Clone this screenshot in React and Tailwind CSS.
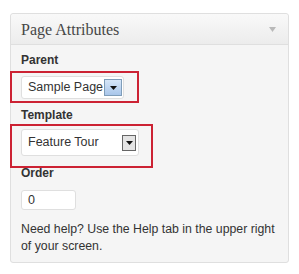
export default function App() {
  return (
    <div className="min-h-screen bg-white pl-[10px] pt-[13px]" style={{ fontFamily: '"Liberation Sans", Arial, sans-serif' }}>
      <div className="relative w-[279px] rounded-[3px] border border-[#dfdfdf] bg-[#f5f5f5]">
        <div className="flex h-[31px] items-center justify-between rounded-t-[3px] border-b border-[#dfdfdf] bg-gradient-to-b from-[#f9f9f9] to-[#ececec] pl-[10px] pr-[12px]">
          <h3 className="pt-[1px] text-[16px] text-[#464646]" style={{ fontFamily: '"Liberation Serif", Georgia, serif' }}>
            Page Attributes
          </h3>
          <svg width="7" height="5" viewBox="0 0 7 5">
            <path d="M0 0 H7 L3.5 5 Z" fill="#b9b9b9" />
          </svg>
        </div>

        <div className="px-[10px] pb-[7px] pt-[7px] text-[12.5px] text-[#333]">
          <p className="text-[12px] font-bold leading-[16px]">Parent</p>
          <div className="mt-[8px] inline-flex h-[23px] items-center gap-[1px] whitespace-nowrap rounded-[3px] border border-[#dfdfdf] bg-white pl-[6px] pr-[1px]">
            <span className="leading-none">Sample Page</span>
            <span className="flex h-[17px] w-[18px] items-center justify-center border border-[#7f9db9] bg-gradient-to-b from-[#d6e6f8] to-[#a9c6ea]">
              <svg width="7" height="4" viewBox="0 0 7 4">
                <path d="M0 0 H7 L3.5 4 Z" fill="#111" />
              </svg>
            </span>
          </div>

          <p className="mt-[8px] text-[12px] font-bold leading-[16px]">Template</p>
          <div className="mt-[6px] flex h-[27px] w-[118px] items-center justify-between whitespace-nowrap rounded-[3px] border border-[#dfdfdf] bg-white pl-[6px] pr-[2px]">
            <span className="leading-none">Feature Tour</span>
            <span className="flex h-[16px] w-[14px] items-center justify-center border border-[#666] bg-[#e4e4e4]">
              <svg width="7" height="4" viewBox="0 0 7 4">
                <path d="M0 0 H7 L3.5 4 Z" fill="#111" />
              </svg>
            </span>
          </div>

          <p className="mt-[9px] text-[12px] font-bold leading-[16px]">Order</p>
          <div className="mt-[9px] flex h-[20px] w-[55px] items-center rounded-[3px] border border-[#dfdfdf] bg-white pl-[6px]">
            <span className="leading-none">0</span>
          </div>

          <div className="mt-[11px] flex flex-col text-[12.3px] leading-[17px]">
            <p className="whitespace-nowrap">Need help? Use the Help tab in the upper right</p>
            <p className="whitespace-nowrap">of your screen.</p>
          </div>
        </div>

        <div className="pointer-events-none absolute left-[-1px] top-[57px] h-[32px] w-[129px] border-2 border-[#cc2233]" />
        <div className="pointer-events-none absolute left-[-1px] top-[110px] h-[44px] w-[143px] border-2 border-[#cc2233]" />
      </div>
    </div>
  );
}
